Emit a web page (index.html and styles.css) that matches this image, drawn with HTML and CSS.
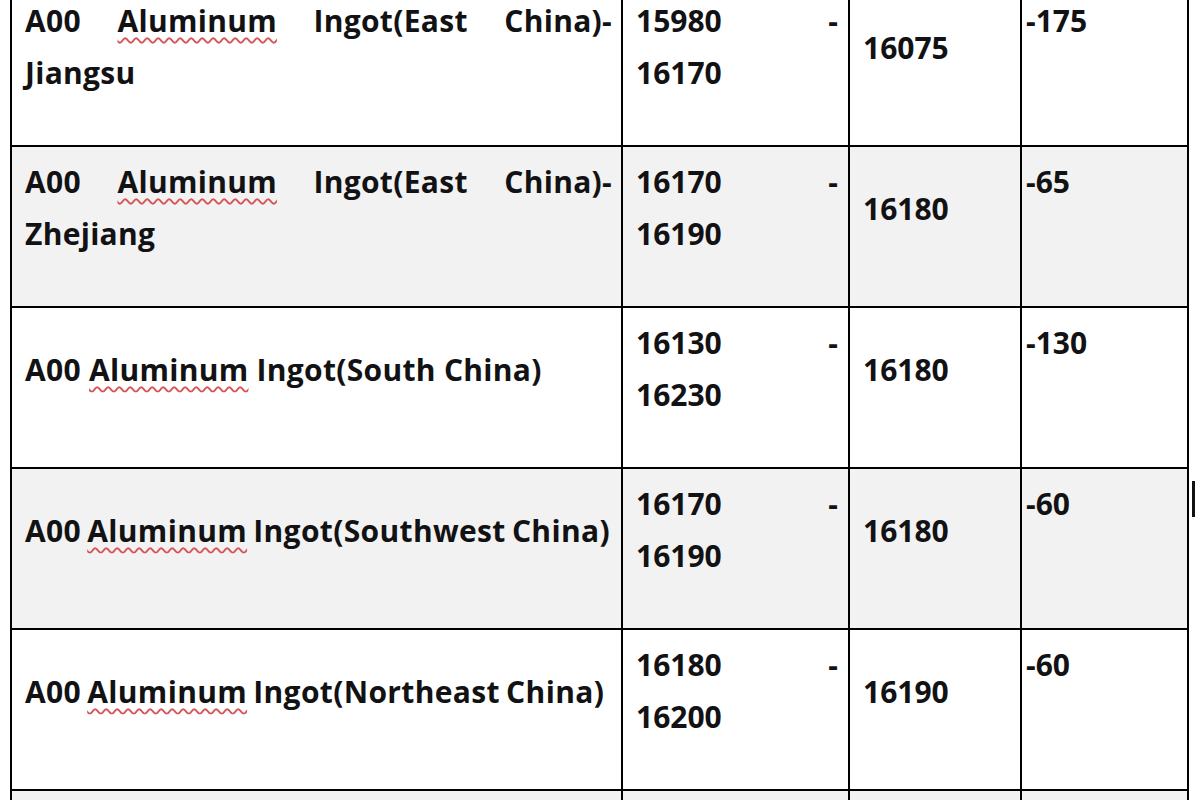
FILE: index.html
```html
<!DOCTYPE html>
<html>
<head>
<meta charset="utf-8">
<link rel="stylesheet" href="styles.css">
</head>
<body>
<div class="page">
  <table class="prices">
    <colgroup>
      <col class="c-name">
      <col class="c-range">
      <col class="c-avg">
      <col class="c-chg">
    </colgroup>
    <tbody>
      <tr class="row-white">
        <td class="name top">
          <div class="just"><span>A00</span><span class="sp">Aluminum</span><span>Ingot(East</span><span>China)-</span></div>
          <div>Jiangsu</div>
        </td>
        <td class="range top"><div class="just"><span>15980</span><span>-</span></div><div>16170</div></td>
        <td class="avg mid">16075</td>
        <td class="chg top">-175</td>
      </tr>
      <tr class="row-grey">
        <td class="name top">
          <div class="just"><span>A00</span><span class="sp">Aluminum</span><span>Ingot(East</span><span>China)-</span></div>
          <div>Zhejiang</div>
        </td>
        <td class="range top"><div class="just"><span>16170</span><span>-</span></div><div>16190</div></td>
        <td class="avg mid">16180</td>
        <td class="chg top">-65</td>
      </tr>
      <tr class="row-white">
        <td class="name mid">A00 <span class="sp">Aluminum</span> Ingot(South China)</td>
        <td class="range top"><div class="just"><span>16130</span><span>-</span></div><div>16230</div></td>
        <td class="avg mid">16180</td>
        <td class="chg top">-130</td>
      </tr>
      <tr class="row-grey">
        <td class="name mid tight">A00 <span class="sp">Aluminum</span> Ingot(Southwest China)</td>
        <td class="range top"><div class="just"><span>16170</span><span>-</span></div><div>16190</div></td>
        <td class="avg mid">16180</td>
        <td class="chg top">-60</td>
      </tr>
      <tr class="row-white">
        <td class="name mid tight">A00 <span class="sp">Aluminum</span> Ingot(Northeast China)</td>
        <td class="range top"><div class="just"><span>16180</span><span>-</span></div><div>16200</div></td>
        <td class="avg mid">16190</td>
        <td class="chg top">-60</td>
      </tr>
      <tr class="row-grey">
        <td class="name mid">&nbsp;</td>
        <td class="range top">&nbsp;</td>
        <td class="avg mid">&nbsp;</td>
        <td class="chg top">&nbsp;</td>
      </tr>
    </tbody>
  </table>
  <div class="cursor"></div>
</div>
</body>
</html>
```

FILE: styles.css
```css
html, body {
  margin: 0;
  padding: 0;
  background: #ffffff;
  overflow: hidden;
}

.page {
  position: relative;
  width: 1200px;
  height: 800px;
  overflow: hidden;
  padding-left: 10px;
  box-sizing: border-box;
}

.prices {
  border-collapse: collapse;
  table-layout: fixed;
  width: 1179px;
  margin-top: -16px;
  font-family: "Open Sans", "Noto Sans", sans-serif;
  font-weight: 700;
  font-size: 30px;
  line-height: 52px;
  color: #121214;
}

.c-name { width: 611px; }
.c-range { width: 227px; }
.c-avg { width: 172px; }
.c-chg { width: 167px; }

.prices tr { height: 161px; }

.prices td {
  border: 2px solid #000000;
  padding: 9px 11px 9px 13px;
  overflow: hidden;
  white-space: nowrap;
}

.prices td.name { letter-spacing: 0.3px; padding-right: 9px; }
.prices td.range { padding-right: 10px; }

.row-white td { background: #ffffff; }
.row-grey td { background: #f2f2f2; }

.prices td.top { vertical-align: top; }
.prices td.mid { vertical-align: middle; padding-bottom: 45px; }

.prices td.chg { padding-left: 4px; }

.just {
  display: flex;
  justify-content: space-between;
}

.sp {
  text-decoration: underline wavy #d65454;
  text-decoration-thickness: 1.5px;
  text-underline-offset: 5px;
  text-decoration-skip-ink: none;
}

.prices td.tight { letter-spacing: 0.35px; word-spacing: -2px; }

.cursor {
  position: absolute;
  left: 1192px;
  top: 481px;
  width: 3px;
  height: 36px;
  background: #111111;
}
```
